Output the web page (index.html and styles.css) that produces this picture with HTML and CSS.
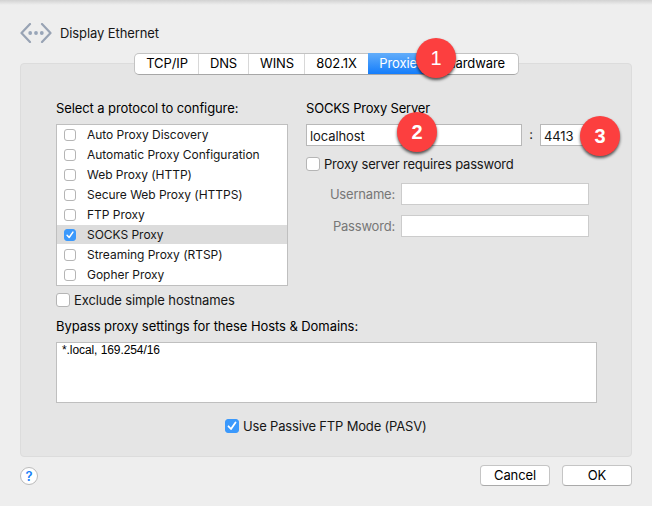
FILE: index.html
```html
<!DOCTYPE html>
<html lang="en">
<head>
<meta charset="utf-8">
<title>Display Ethernet</title>
<link rel="stylesheet" href="styles.css">
</head>
<body>
<main class="sheet">
  <header class="title">
    <svg class="ethernet" width="32" height="20" viewBox="0 0 32 20" fill="none">
      <path d="M10 1 1.500 10 10 19M22 1l8.500 9L22 19" stroke="#98a3b4" stroke-width="2.200" stroke-linecap="round" stroke-linejoin="round"/>
      <g fill="#98a5b8"><circle cx="10.200" cy="10" r="1.900"/><circle cx="16" cy="10" r="1.900"/><circle cx="21.800" cy="10" r="1.900"/></g>
    </svg>
    <h1>Display Ethernet</h1>
  </header>
  <section class="panel">
    <nav class="tabs">
      <span class="tab tcp">TCP/IP</span><span class="tab dns">DNS</span><span class="tab wins">WINS</span><span class="tab dot1x">802.1X</span><span class="tab active">Proxies<b class="badge one">1</b></span><span class="tab hardware">Hardware</span>
    </nav>
    <div class="columns">
      <div class="protocols">
        <div class="label">Select a protocol to configure:</div>
        <ul class="list">
          <li><i class="box small"></i><span>Auto Proxy Discovery</span></li>
          <li><i class="box small"></i><span>Automatic Proxy Configuration</span></li>
          <li><i class="box small"></i><span>Web Proxy (HTTP)</span></li>
          <li><i class="box small"></i><span>Secure Web Proxy (HTTPS)</span></li>
          <li><i class="box small"></i><span>FTP Proxy</span></li>
          <li class="selected"><i class="box small checked"><svg viewBox="1 1 12 12"><path d="M3.500 7.300 6 10 10.500 3.500"/></svg></i><span>SOCKS Proxy</span></li>
          <li><i class="box small"></i><span>Streaming Proxy (RTSP)</span></li>
          <li><i class="box small"></i><span>Gopher Proxy</span></li>
        </ul>
        <div class="check exclude"><i class="box"></i><span>Exclude simple hostnames</span></div>
      </div>
      <div class="server">
        <div class="label socks">SOCKS Proxy Server</div>
        <div class="address">
          <div class="field host">localhost<b class="badge two">2</b></div>
          <span class="colon">:</span>
          <div class="field port">4413<b class="badge three">3</b></div>
        </div>
        <div class="check requires"><i class="box"></i><span>Proxy server requires password</span></div>
        <div class="credential"><span>Username:</span><div class="field disabled"></div></div>
        <div class="credential pass"><span>Password:</span><div class="field disabled"></div></div>
      </div>
    </div>
    <div class="label bypass">Bypass proxy settings for these Hosts &amp; Domains:</div>
    <div class="textarea">*.local, 169.254/16</div>
    <div class="check passive"><i class="box checked"><svg viewBox="1 1 12 12"><path d="M3.500 7.300 6 10 10.500 3.500"/></svg></i><span>Use Passive FTP Mode (PASV)</span></div>
  </section>
  <footer class="footer">
    <span class="help">?</span>
    <span class="button cancel">Cancel</span>
    <span class="button">OK</span>
  </footer>
</main>
</body>
</html>
```
FILE: styles.css
```css
* { box-sizing: border-box; }
body {
  margin: 0;
  background: #eee;
  color: #161616;
  font: 13px/16px Inter, "Liberation Sans", sans-serif;
  letter-spacing: -0.1px;
}
.sheet {
  height: 506px;
  padding: 22px 20px 0;
  background: linear-gradient(#d2d2d2, #eee 5px);
  overflow: hidden;
}
.title { display: flex; align-items: center; gap: 8px; height: 21px; }
h1 { margin: 0; font-size: 13px; font-weight: 400; }
.panel {
  width: 612px;
  height: 394px;
  margin-top: 20px;
  padding: 0 35px;
  background: #e5e5e5;
  border: 1px solid #dcdcdc;
  border-radius: 4px;
}
.tabs {
  display: flex;
  width: 385px;
  height: 22px;
  margin: -11px 0 0 78px;
  background: #fff;
  border: 1px solid #c3c3c3;
  border-bottom-color: #a7a7a7;
  border-radius: 5px;
  color: #000;
}
.tab { border-right: 1px solid #d8d8d8; text-align: center; line-height: 19px; }
.tcp { width: 64px; padding-left: 1px; }
.dns { width: 50px; }
.wins { width: 56px; padding-left: 1px; }
.dot1x { width: 63px; border-right: 0; }
.active {
  position: relative;
  width: 64px;
  height: 21px;
  margin-top: -1px;
  padding-left: 3px;
  line-height: 21px;
  border: 0;
  color: #fff;
  background: linear-gradient(#62adfa, #147dfb);
}
.hardware { width: 86px; border: 0; padding-left: 1px; }
.badge {
  position: absolute;
  z-index: 2;
  width: 40px;
  height: 40px;
  border-radius: 50%;
  background: #fc3f3f;
  box-shadow: 0 2px 3px rgba(0, 0, 0, .65);
  color: #fff;
  font: 700 20px/40px "Liberation Sans", Arial, sans-serif;
  letter-spacing: 0;
  text-align: center;
}
.one { left: 48px; top: -15px; font-weight: 400; }
.two { left: 90px; top: -13px; }
.three { left: 39px; top: -9px; }
.columns { display: flex; gap: 18px; margin-top: 25px; }
.protocols { flex: none; width: 232px; }
.label { height: 24px; color: #000; }
.socks { letter-spacing: -0.2px; }
.list {
  height: 162px;
  margin: 0;
  padding: 0;
  list-style: none;
  background: #fff;
  border: 1px solid #bfbfbf;
  font-size: 12px;
  letter-spacing: -0.03px;
}
.list li { display: flex; align-items: center; gap: 11px; height: 20px; padding-left: 7px; }
.list .selected { background: #dcdcdc; height: 19px; margin-bottom: 1px; }
.box {
  display: block;
  width: 14px;
  height: 14px;
  flex: none;
  background: #fff;
  border: 1px solid #b5b5b5;
  border-radius: 3px;
}
.small { width: 12px; height: 12px; }
.checked { border-color: #3b99fc; background: #3b99fc; }
.box svg { display: block; width: 100%; height: 100%; overflow: visible; }
.box path { fill: none; stroke: #fff; stroke-width: 1.8; stroke-linecap: round; stroke-linejoin: round; }
.check { display: flex; align-items: center; gap: 4px; height: 16px; }
.exclude { margin-top: 6px; }
.server { flex: none; width: 284px; }
.address { display: flex; }
.field { position: relative; height: 22px; padding-left: 3px; background: #fff; border: 1px solid #b8b8b8; line-height: 22px; }
.host { width: 216px; }
.colon { width: 18px; text-align: center; line-height: 21px; }
.port { width: 49px; }
.requires { margin-top: 10px; letter-spacing: -0.18px; }
.credential { display: flex; justify-content: space-between; width: 283px; margin-top: 11px; color: #777; line-height: 22px; letter-spacing: -0.2px; }
.credential span { width: 89px; text-align: right; }
.pass { margin-top: 10px; }
.disabled { width: 188px; border-color: #ccc; }
.bypass { margin-top: 10px; letter-spacing: -0.07px; }
.textarea { width: 541px; height: 61px; padding: 0 5px; background: #fff; border: 1px solid #bfbfbf; color: #000; font: 12px/15px "Liberation Sans", Arial, sans-serif; letter-spacing: -0.08px; }
.passive { margin: 15px 0 0 169px; letter-spacing: -0.18px; }
.footer { display: flex; align-items: center; height: 22px; margin-top: 8px; color: #000; }
.help { width: 18px; height: 18px; margin-right: auto; background: #fff; border: 1px solid #bbb; border-radius: 50%; color: #1681f8; font-weight: 600; line-height: 16px; text-align: center; }
.button { width: 70px; height: 21px; margin-top: -1px; background: #fff; border: 1px solid #c5c5c5; border-bottom-color: #aaa; border-radius: 4px; text-align: center; line-height: 19px; }
.cancel { margin-right: 12px; }
```
